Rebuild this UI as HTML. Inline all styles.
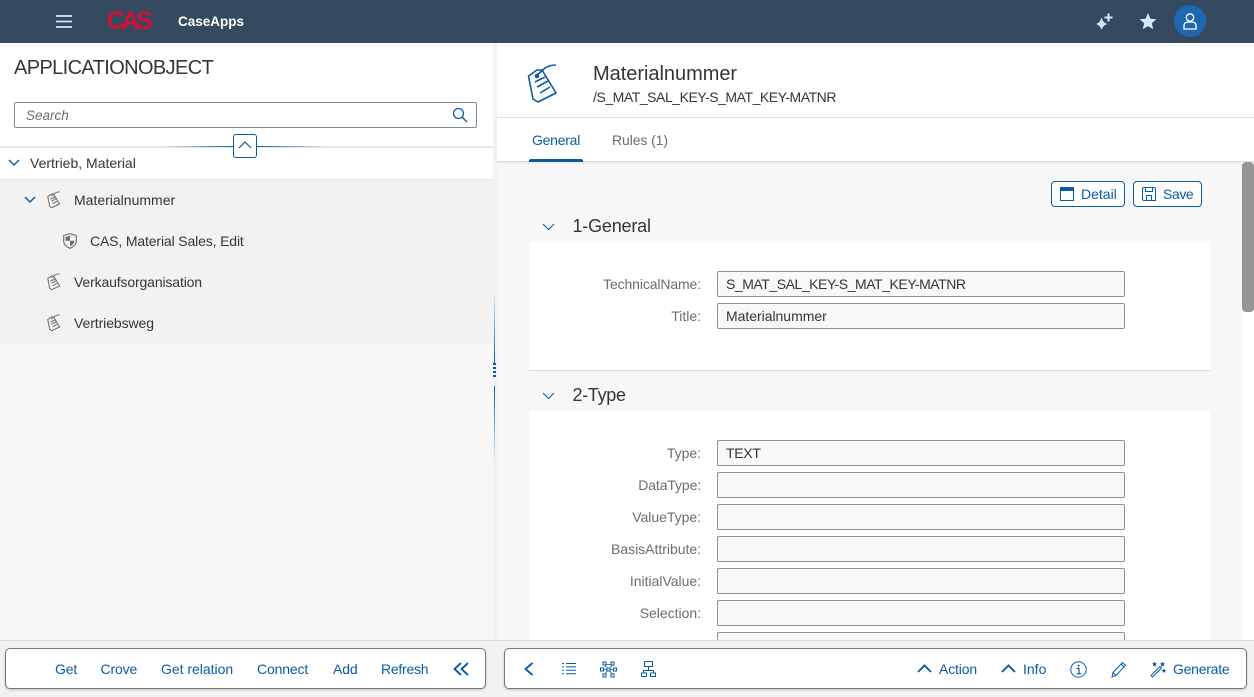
<!DOCTYPE html>
<html><head><meta charset="utf-8"><style>
html,body{margin:0;padding:0;width:1254px;height:696px;overflow:hidden;background:#f7f7f7;font-family:"Liberation Sans",sans-serif;font-size:14px;color:#32363a}
.a{position:absolute;white-space:nowrap}
.b{background:#fff}
.lk{color:#0a5ba5;line-height:16px;letter-spacing:-.15px}
.lb{color:#6a6d70;right:553px;line-height:16px;text-align:right;letter-spacing:-.02px}
.t{letter-spacing:-.14px}
.in{position:absolute;left:717px;width:406px;height:24px;border:1px solid #89919a;border-radius:2px;background:#f8f8f8;line-height:24px;text-indent:8px;color:#32363a;white-space:nowrap;letter-spacing:-.45px}
.btn{position:absolute;top:181px;height:24px;border:1px solid #0a5ba5;border-radius:4px;background:#fff}
svg{position:absolute;overflow:visible}
</style></head><body>
<div class="a" style="left:0;top:0;width:1254px;height:43px;background:#354a5f"></div>
<svg style="left:56px;top:15px" width="17" height="13"><path d="M0 1h16M0 6.500h16M0 12h16" stroke="#d1e8ff" stroke-width="1.800"/></svg>
<div class="a" style="left:107px;top:7px;font-size:25px;font-weight:700;color:#d0103a;letter-spacing:-3.600px;line-height:28px">CAS</div>
<div class="a" style="left:147px;top:16px;font-size:4px;color:#d0103a;line-height:6px">OO</div>
<div class="a" style="left:178px;top:14px;font-size:13.500px;font-weight:700;color:#fff;line-height:16px">CaseApps</div>
<svg style="left:1095px;top:12px" width="20" height="20" fill="#d1e8ff"><path d="M1 12Q5 11 6.500 5.500 8 11 12.500 12 8 13 6.500 18 5 13 1 12Z"/><path d="M9.500 4.500h3v-3h2v3h3v2h-3v3h-2v-3h-3Z"/></svg>
<svg style="left:1139px;top:12px" width="18" height="18" fill="#d1e8ff"><path d="M9 1l2.400 5.700 6 .5-4.600 4 1.400 6L9 14.100 3.800 17.200l1.400-6-4.600-4 6-.5z"/></svg>
<div class="a" style="left:1174px;top:5px;width:32px;height:32px;border-radius:50%;background:#1f68b1"></div>
<svg style="left:1183px;top:13px" width="15" height="17" fill="none" stroke="#fff" stroke-width="1.300"><circle cx="7" cy="4.500" r="3.700"/><path d="M1 16v-3.500Q1 9.500 4.500 9h5Q13 9.500 13 12.500V16Z"/></svg>

<!-- left panel -->
<div class="a b" style="left:0;top:43px;width:493px;height:103px"></div>
<div class="a" style="left:14px;top:56px;font-size:20px;line-height:24px;letter-spacing:-.62px">APPLICATIONOBJECT</div>
<div class="a b" style="left:14px;top:102px;width:461px;height:24px;border:1px solid #7d8a96;border-radius:2px"></div>
<div class="a" style="left:26px;top:108px;font-style:italic;color:#6a6d70;line-height:16px;font-size:13.500px">Search</div>
<svg style="left:452px;top:107px" width="16" height="16" fill="none" stroke="#0a5ba5" stroke-width="1.300"><circle cx="6.500" cy="6.500" r="5"/><path d="M10 10l5 5"/></svg>
<div class="a" style="left:0;top:146px;width:493px;height:2px;background:#e4e4e4"></div>
<div class="a" style="left:0;top:148px;width:493px;height:31px;background:#fff;border-bottom:1px solid #e4e4e4"></div>
<div class="a" style="left:165px;top:146px;width:160px;height:1px;background:linear-gradient(90deg,rgba(10,91,165,0),#0a5ba5 45%,#0a5ba5 55%,rgba(10,91,165,0))"></div>
<div class="a b" style="left:233px;top:134px;width:22px;height:22px;border:1px solid #0a5ba5;border-radius:3px"></div>
<svg style="left:238px;top:141px" width="14" height="8" fill="none" stroke="#0a5ba5" stroke-width="1.200"><path d="M1 7l6-6 6 6"/></svg>
<svg style="left:8px;top:159px" width="12" height="8" fill="none" stroke="#0a5ba5" stroke-width="1.500"><path d="M1 1l5 5 5-5"/></svg>
<div class="a" style="left:30px;top:155px;line-height:16px">Vertrieb, Material</div>
<div class="a" style="left:0;top:180px;width:493px;height:164px;background:#f2f2f2"></div>
<svg style="left:24px;top:196px" width="12" height="8" fill="none" stroke="#0a5ba5" stroke-width="1.500"><path d="M1 1l5 5 5-5"/></svg>
<svg style="left:47px;top:191px" width="14" height="18" viewBox="0 0 32 42" fill="none" stroke="#6a6d70" stroke-width="2.400"><path d="M1.500 13L10 7h5l14 23-18 9-5-3Z"/><path d="M10 12Q15 8 18 5q5-3 11-3M8 19l10-5M10 24l11-6M13 30l10-6"/></svg>
<div class="a" style="left:74px;top:192px;line-height:16px">Materialnummer</div>
<svg style="left:63px;top:233px" width="14" height="16"><path d="M7 .7L13.300 2.500V8.500Q13 13 7 15.300 1 13 .7 8.500V2.500Z" fill="none" stroke="#6a6d70" stroke-width="1.100"/><path d="M7 2.800L2.500 4v3.800H7ZM7 7.800v5.500q4-1.500 4.500-5.500Z" fill="#6a6d70"/></svg>
<div class="a t" style="left:90px;top:233px;line-height:16px">CAS, Material Sales, Edit</div>
<svg style="left:47px;top:273px" width="14" height="18" viewBox="0 0 32 42" fill="none" stroke="#6a6d70" stroke-width="2.400"><path d="M1.500 13L10 7h5l14 23-18 9-5-3Z"/><path d="M10 12Q15 8 18 5q5-3 11-3M8 19l10-5M10 24l11-6M13 30l10-6"/></svg>
<div class="a t" style="left:74px;top:274px;line-height:16px">Verkaufsorganisation</div>
<svg style="left:47px;top:314px" width="14" height="18" viewBox="0 0 32 42" fill="none" stroke="#6a6d70" stroke-width="2.400"><path d="M1.500 13L10 7h5l14 23-18 9-5-3Z"/><path d="M10 12Q15 8 18 5q5-3 11-3M8 19l10-5M10 24l11-6M13 30l10-6"/></svg>
<div class="a" style="left:74px;top:315px;line-height:16px;letter-spacing:-.08px">Vertriebsweg</div>

<!-- splitter -->
<div class="a" style="left:493px;top:43px;width:4px;height:597px;background:#f0f2f3"></div>
<div class="a" style="left:494px;top:290px;width:1px;height:74px;background:linear-gradient(180deg,rgba(10,91,165,0),#0a5ba5)"></div>
<div class="a" style="left:494px;top:386px;width:1px;height:74px;background:linear-gradient(0deg,rgba(10,91,165,0),#0a5ba5)"></div>
<svg style="left:493px;top:362px" width="3" height="16" fill="#0a5ba5"><rect y="1" width="3" height="2"/><rect y="5" width="3" height="2"/><rect y="9" width="3" height="2"/><rect y="13" width="3" height="2"/></svg>

<!-- right header -->
<div class="a b" style="left:497px;top:43px;width:757px;height:74px"></div>
<div class="a" style="left:497px;top:117px;width:757px;height:1px;background:#dcdcdc"></div>
<div class="a b" style="left:497px;top:118px;width:757px;height:43px;border-bottom:1px solid #dcdcdc;box-shadow:0 1px 2px rgba(0,0,0,.06)"></div>
<svg style="left:527px;top:63px" width="32" height="42" fill="none" stroke="#0a5ba5" stroke-width="1.600" stroke-linejoin="round"><path d="M1.500 13L10 7h5l14 23-18 9-5-3Z"/><circle cx="10" cy="13" r="1.500" fill="#0a5ba5"/><path d="M10 12Q15 8 18 5q5-3 11-3M8 19l10-5M10 24l11-6M13 30l10-6"/></svg>
<div class="a" style="left:593px;top:62px;font-size:20px;line-height:24px;letter-spacing:-.03px">Materialnummer</div>
<div class="a" style="left:593px;top:89px;line-height:16px;letter-spacing:-.45px">/S_MAT_SAL_KEY-S_MAT_KEY-MATNR</div>
<div class="a" style="left:532px;top:132px;color:#0a5ba5;line-height:16px;letter-spacing:-.25px">General</div>
<div class="a" style="left:529px;top:159px;width:54px;height:3px;background:#0a5ba5;border-radius:2px 2px 0 0"></div>
<div class="a" style="left:612px;top:132px;color:#6a6d70;line-height:16px;letter-spacing:-.1px">Rules (1)</div>

<!-- scrollbar -->
<div class="a b" style="left:1242px;top:162px;width:12px;height:478px"></div>
<div class="a" style="left:1242px;top:162px;width:12px;height:150px;background:#959595;border-radius:4px"></div>

<!-- buttons -->
<div class="btn" style="left:1051px;width:72px"></div>
<svg style="left:1060px;top:187px" width="15" height="14"><rect x=".5" y=".5" width="13" height="13" fill="none" stroke="#0a5ba5"/><rect width="14" height="4" fill="#0a5ba5"/></svg>
<div class="a lk" style="left:1081px;top:186px;letter-spacing:0">Detail</div>
<div class="btn" style="left:1133px;width:67px"></div>
<svg style="left:1142px;top:187px" width="15" height="15" fill="none" stroke="#0a5ba5"><path d="M1.500.5h11l1 1v12h-12l-1-1v-11ZM3.500.5v4h7v-4M4.500 13.500v-5h5v5"/></svg>
<div class="a lk" style="left:1163px;top:186px;letter-spacing:-.4px">Save</div>

<!-- section 1 -->
<svg style="left:542px;top:223px" width="13" height="8" fill="none" stroke="#0a5ba5" stroke-width="1"><path d="M1 1l5.500 5.500L12 1"/></svg>
<div class="a" style="left:572.500px;top:214px;font-size:18px;line-height:24px;letter-spacing:-.2px">1-General</div>
<div class="a b" style="left:529px;top:242px;width:681px;height:128px;border-bottom:1px solid #d9d9d9"></div>
<div class="a lb" style="top:276px;letter-spacing:-.12px">TechnicalName:</div>
<div class="in" style="top:271px">S_MAT_SAL_KEY-S_MAT_KEY-MATNR</div>
<div class="a lb" style="top:308px">Title:</div>
<div class="in" style="top:303px;letter-spacing:-.03px">Materialnummer</div>

<!-- section 2 -->
<svg style="left:542px;top:392px" width="13" height="8" fill="none" stroke="#0a5ba5" stroke-width="1"><path d="M1 1l5.500 5.500L12 1"/></svg>
<div class="a" style="left:572.500px;top:383px;font-size:18px;line-height:24px;letter-spacing:-.3px">2-Type</div>
<div class="a b" style="left:529px;top:411px;width:681px;height:229px"></div>
<div class="a lb" style="top:445px">Type:</div><div class="in" style="top:440px;letter-spacing:-.3px">TEXT</div>
<div class="a lb" style="top:477px;letter-spacing:-.12px">DataType:</div><div class="in" style="top:472px"></div>
<div class="a lb" style="top:509px">ValueType:</div><div class="in" style="top:504px"></div>
<div class="a lb" style="top:541px">BasisAttribute:</div><div class="in" style="top:536px"></div>
<div class="a lb" style="top:573px">InitialValue:</div><div class="in" style="top:568px"></div>
<div class="a lb" style="top:605px">Selection:</div><div class="in" style="top:600px"></div>
<div class="in" style="top:632px"></div>

<!-- footer -->
<div class="a" style="left:0;top:640px;width:1254px;height:56px;background:#f2f2f2;border-top:1px solid #d9d9d9"></div>
<div class="a b" style="left:5px;top:648px;width:479px;height:39px;border:1px solid #75797d;border-radius:5px;box-shadow:0 1px 2px rgba(0,0,0,.2)"></div>
<div class="a lk" style="left:55px;top:661px">Get</div>
<div class="a lk" style="left:100.500px;top:661px">Crove</div>
<div class="a lk" style="left:161px;top:661px;letter-spacing:-.02px">Get relation</div>
<div class="a lk" style="left:257px;top:661px">Connect</div>
<div class="a lk" style="left:333px;top:661px">Add</div>
<div class="a lk" style="left:381px;top:661px;letter-spacing:-.25px">Refresh</div>
<svg style="left:453px;top:662px" width="16" height="14" fill="none" stroke="#0a5ba5" stroke-width="1.900"><path d="M8 1L1.500 7 8 13M15 1L8.500 7 15 13"/></svg>

<div class="a b" style="left:504px;top:648px;width:741px;height:39px;border:1px solid #75797d;border-radius:5px;box-shadow:0 1px 2px rgba(0,0,0,.2)"></div>
<svg style="left:524px;top:662px" width="10" height="14" fill="none" stroke="#0a5ba5" stroke-width="1.900"><path d="M8.500 1L1.500 7l7 6"/></svg>
<svg style="left:562px;top:663px" width="14" height="12" stroke="#0a5ba5" stroke-width="1"><path d="M0 .5h2M4 .5h10M0 3.900h2M4 3.900h10M0 7.300h2M4 7.300h10M0 10.700h2M4 10.700h10"/></svg>
<svg style="left:600px;top:661px" width="17" height="17" fill="#fff" stroke="#0a5ba5" stroke-width="1"><path d="M4 3.500L13 3.500M8.500 8.500L4 3.500M8.500 8.500L13 3.500M2 8.500H15M8.500 8.500L4 14M8.500 8.500L13 14" stroke-width=".8"/><rect x="3" y="1" width="3" height="3"/><rect x="11" y="1" width="3" height="3"/><rect x=".5" y="7" width="3" height="3"/><rect x="7" y="7" width="3" height="3"/><rect x="13.500" y="7" width="3" height="3"/><rect x="3" y="13" width="3" height="3"/><rect x="11" y="13" width="3" height="3"/></svg>
<svg style="left:641px;top:661px" width="15" height="16" fill="none" stroke="#0a5ba5" stroke-width="1"><rect x="3.500" y=".5" width="8" height="5"/><path d="M7.500 5.500v4M2.500 12V9.500h10V12"/><rect x=".5" y="12" width="5" height="3.500"/><rect x="9.500" y="12" width="5" height="3.500"/></svg>
<svg style="left:917px;top:664px" width="15" height="9" fill="none" stroke="#0a5ba5" stroke-width="1.900"><path d="M1 8l6.500-6.500L14 8"/></svg>
<div class="a lk" style="left:939px;top:661px">Action</div>
<svg style="left:1001px;top:664px" width="15" height="9" fill="none" stroke="#0a5ba5" stroke-width="1.900"><path d="M1 8l6.500-6.500L14 8"/></svg>
<div class="a lk" style="left:1023px;top:661px;letter-spacing:0">Info</div>
<svg style="left:1070px;top:661px" width="17" height="17" fill="none" stroke="#0a5ba5" stroke-width="1"><circle cx="8.500" cy="8.500" r="7.700"/><path d="M6.500 7.500h2.500v5M6.500 12.800h5" stroke-width="1.200"/><circle cx="8.500" cy="4.800" r="1" fill="#0a5ba5" stroke="none"/></svg>
<svg style="left:1111px;top:661px" width="16" height="17" fill="none" stroke="#0a5ba5" stroke-width="1"><path d="M1 16l1-4.500L11.500 1.500l3 2.800L5 14.500ZM2 11.500l3 3M10 3l3 3"/></svg>
<svg style="left:1150px;top:661px" width="17" height="16" fill="#0a5ba5"><path d="M1 14.500L10 5.500l1.500 1.500-9 9Z" fill="none" stroke="#0a5ba5"/><path d="M4.500 .5l.8 1.700 1.700.3-1.300 1.200.3 1.800L4.500 4.600 3 5.500l.3-1.800L2 2.500l1.700-.3ZM12.500 .5l.8 1.700 1.700.3-1.300 1.200.3 1.800-1.500-.9-1.500.9.3-1.800L10 2.500l1.700-.3ZM14 7.500l.7 1.400 1.500.3-1.100 1 .3 1.500-1.400-.7-1.400.7.300-1.500-1.100-1 1.500-.3Z"/></svg>
<div class="a lk" style="left:1173px;top:661px;letter-spacing:-.25px">Generate</div>
</body></html>
